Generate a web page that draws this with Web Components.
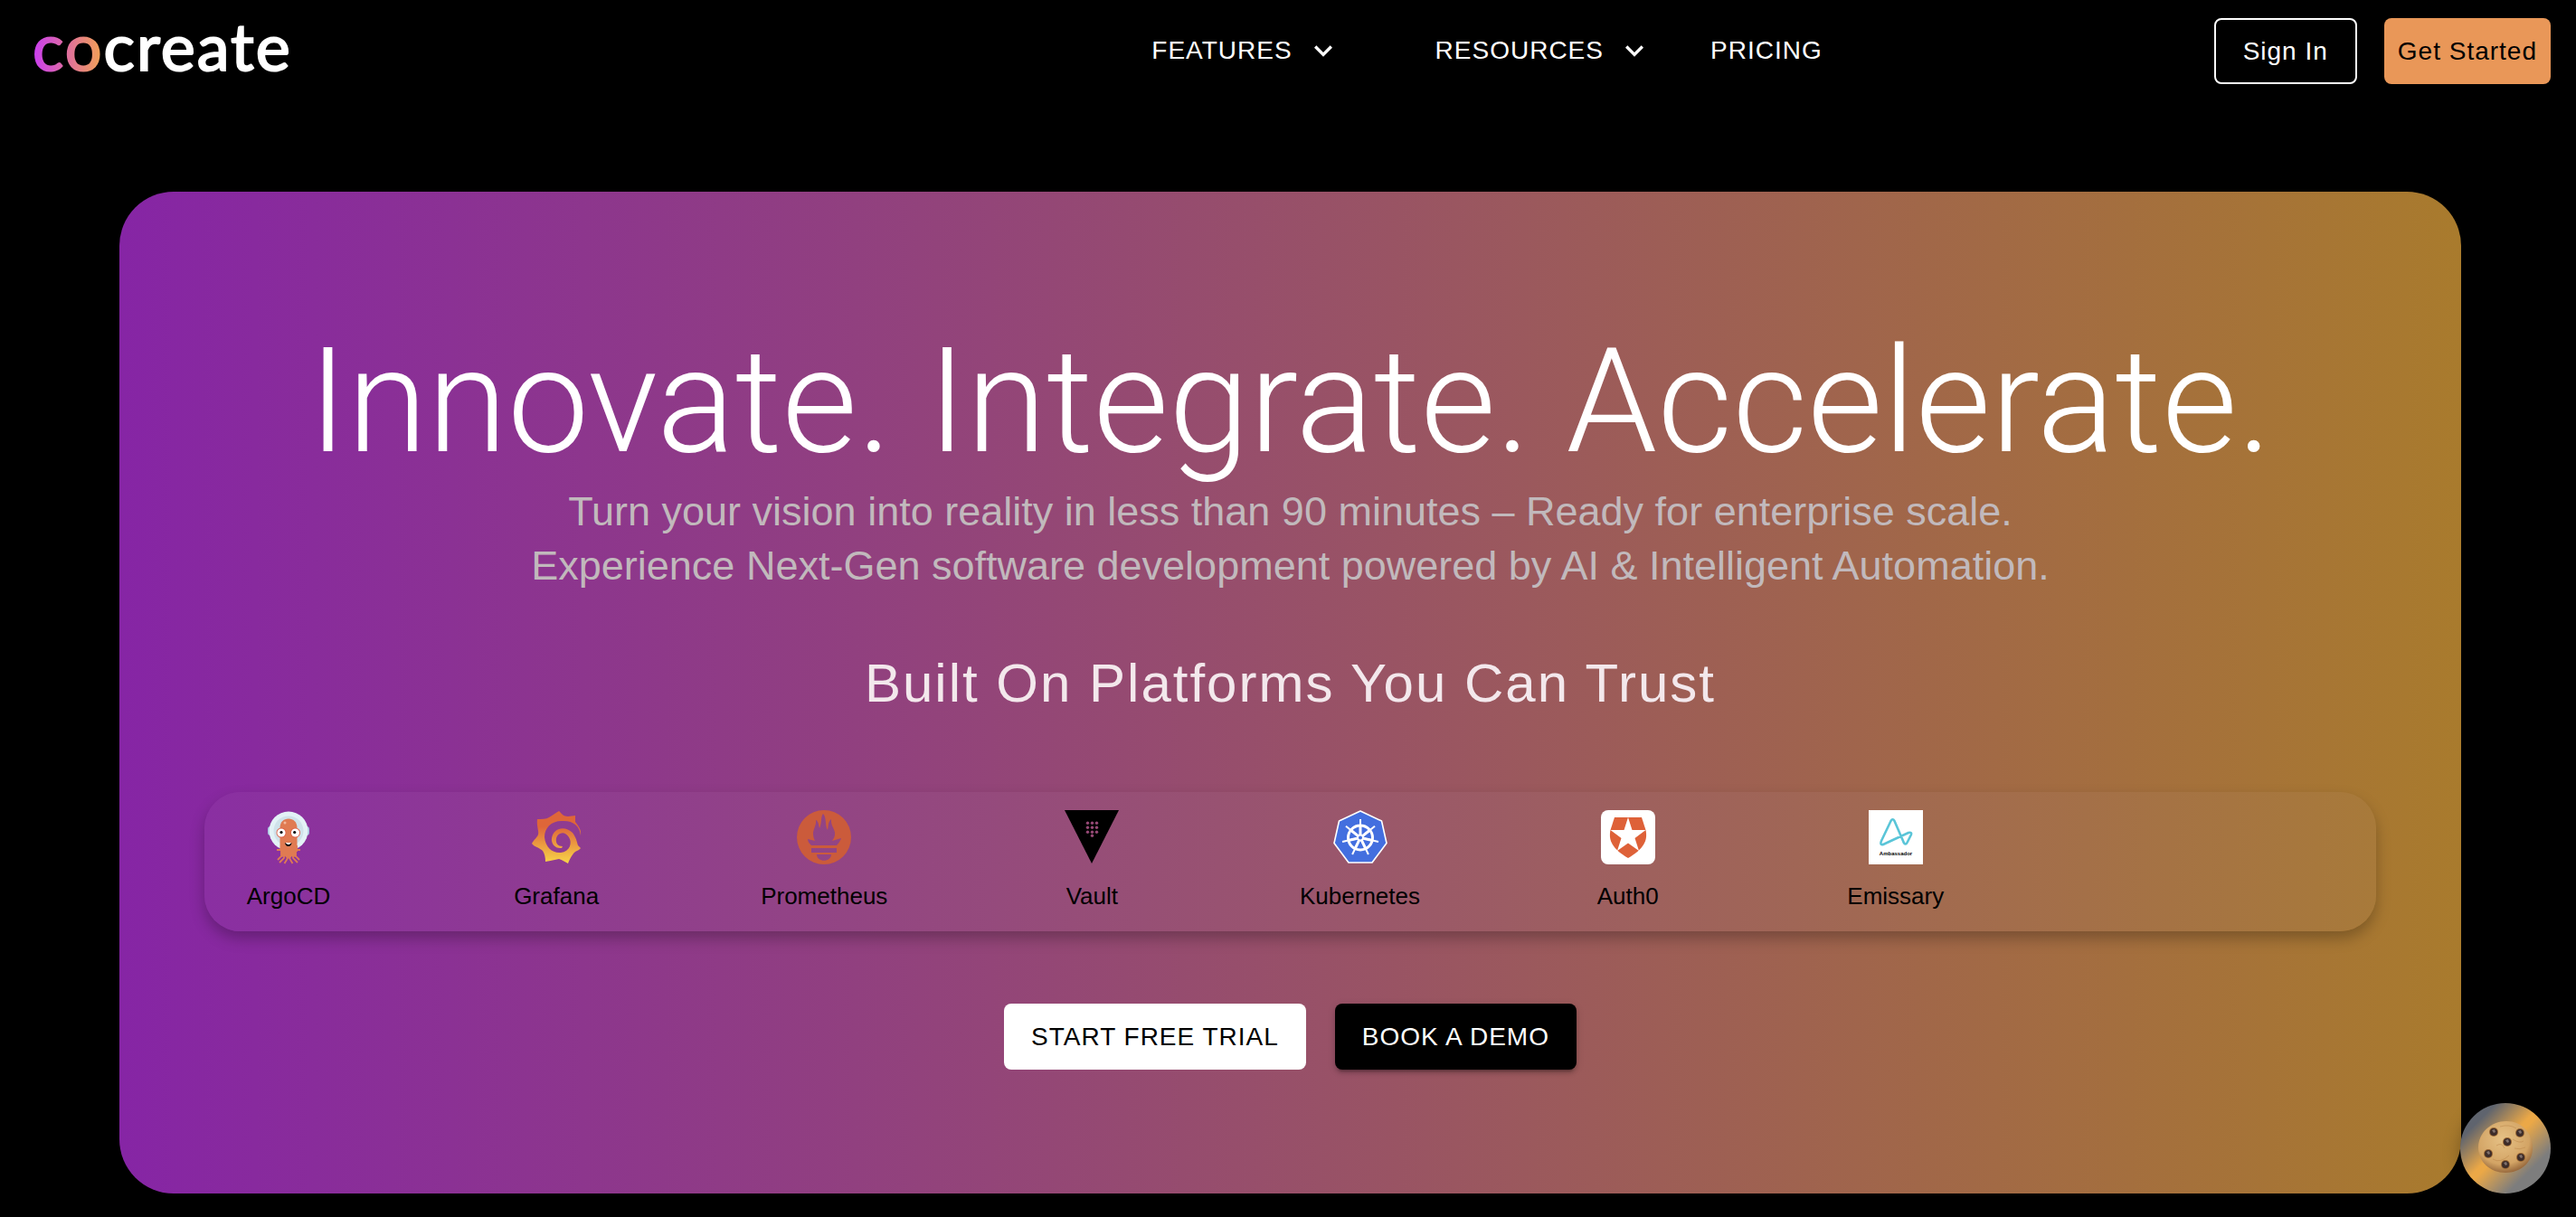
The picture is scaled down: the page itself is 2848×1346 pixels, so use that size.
<!DOCTYPE html>
<html lang="en">
<head>
<meta charset="utf-8">
<meta name="viewport" content="width=device-width, initial-scale=1">
<title>cocreate</title>
<style>
  :root {
    --font-sans: "Liberation Sans", Arial, sans-serif;
    --font-light: Roboto, "Liberation Sans", sans-serif;
    --font-logo: Lato, sans-serif;
    --color-bg: #000;
    --color-fg: #fff;
    --color-accent: #e99758;
    --size-label: 26px;
    --size-body: 28px;
    --size-lead: 45px;
    --size-title: 60px;
    --size-display: 161px;
    --radius-sm: 8px;
    --radius-md: 40px;
    --radius-lg: 60px;
  }
  body { margin: 0; background: var(--color-bg); color: var(--color-fg); font-family: var(--font-sans); }
</style>
</head>
<body>
<cc-header></cc-header>
<main>
  <cc-hero>
    <span slot="title">Innovate. Integrate. Accelerate.</span>
    <span slot="lead">Turn your vision into reality in less than 90 minutes – Ready for enterprise scale.<br>Experience Next-Gen software development powered by AI &amp; Intelligent Automation.</span>
    <span slot="subtitle">Built On Platforms You Can Trust</span>
    <cc-platforms slot="platforms">
      <cc-platform icon="argo">ArgoCD</cc-platform>
      <cc-platform icon="grafana">Grafana</cc-platform>
      <cc-platform icon="prometheus">Prometheus</cc-platform>
      <cc-platform icon="vault">Vault</cc-platform>
      <cc-platform icon="kubernetes">Kubernetes</cc-platform>
      <cc-platform icon="auth0">Auth0</cc-platform>
      <cc-platform icon="emissary">Emissary</cc-platform>
    </cc-platforms>
    <cc-button slot="actions" variant="light">START FREE TRIAL</cc-button>
    <cc-button slot="actions" variant="dark">BOOK A DEMO</cc-button>
  </cc-hero>
</main>
<cc-cookie></cc-cookie>

<script>
const ICONS = {
  argo: `
    <rect x="7" y="18" width="46" height="10" rx="3" fill="#a9c6e2"/>
    <circle cx="30" cy="23" r="21.500" fill="#e3f2f6"/>
    <circle cx="30" cy="23" r="16.500" fill="#cfe2ea"/>
    <path d="M20.500 20c0-7 4-10.500 9.500-10.500S39.500 13 39.500 20v24h-19z" fill="#e07b52"/>
    <path d="M21 40h18v6M22 42v9l-4 4M25 42v11l-5 5M28.500 42v12l-3 5M31.500 42v12l3 5M35 42v11l5 5M38 42v9l4 4M17 44h5M43 44h-5" fill="none" stroke="#e07b52" stroke-width="1.800"/>
    <path d="M21 40h18l-1 12-4-1-4 3-4-3-4 1z" fill="#e07b52"/>
    <circle cx="26" cy="14" r="1.500" fill="#f4b79b"/>
    <circle cx="22" cy="25" r="5.500" fill="#dd6248"/><circle cx="37.500" cy="25" r="5.500" fill="#dd6248"/>
    <circle cx="22" cy="25" r="4.600" fill="#fff"/><circle cx="37.500" cy="25" r="4.600" fill="#fff"/>
    <circle cx="22" cy="24.500" r="1.600"/><circle cx="36.700" cy="24.500" r="1.600"/>
    <path d="M26 36q4 2.500 7.500 0-.5 4-3.700 4T26 36z"/><path d="M26.500 36h6.500l-2 2h-2z" fill="#fff"/>`,
  grafana: `
    <defs><linearGradient id="g" x1="0" y1="1" x2="0" y2="0"><stop offset="0" stop-color="#f8d548"/><stop offset=".7" stop-color="#df6639"/></linearGradient></defs>
    <path fill="url(#g)" d="M57 28C56 17 48 11 36 12C24 12 17 20 17 30C18 41 26 48 35 47C45 46 48 36 44 30C40 23 32 24 30 31C29 37 32 40 37 40L36 42C29 43 24 37 25 31C27 19 40 17 48 25C52 30 53 36 54 39L57 42C55 45 51 45 49 48C46 52 45 54 43 59C39 57 37 55 33 54C28 55 24 56 18 57C18 52 17 48 15 45C11 41 6 41 3 37C5 33 9 30 10 27C11 23 8 18 9 10C14 10 19 10 22 8C26 6 29 3 33 1C36 4 38 7 43 7L51 6L51 13C54 17 58 21 57 28Z"/>`,
  prometheus: `
    <path fill="#cb5b3b" fill-rule="evenodd" d="M30 0a30 30 0 1 0 0 60 30 30 0 0 0 0-60ZM29 4C33 8 31 17 34 22C35 19 34 13 38 10C37 17 43 22 42 27C42 30 40 32 39 34L49 31C48 34 46 37 44 39H16C14 37 12 35 12 32L20 34C19 32 18 29 18 26C18 21 22 16 21 11C24 12 24 17 25 20C28 14 26 8 29 4ZM16 42H44V47H16ZM22 49H38C38 58 22 58 22 49Z"/>`,
  vault: `
    <path d="M0 0H60L30 59Z"/>
    <g fill="#964976">${[[14, [25, 30, 35]], [19, [25, 30, 35]], [24, [25, 30, 35]], [28, [30]]].map(([y, xs]) => xs.map(x => `<circle cx="${x + .5}" cy="${y + .3}" r="1.700"/>`).join('')).join('')}</g>`,
  kubernetes: `
    <path d="M30 1L53.500 12L59 36.500L43 58H17L1 36.500L6.500 12Z" fill="#436fdf" stroke="#fff" stroke-width="1.600" stroke-linejoin="round"/>
    <g stroke="#fff" fill="none"><circle cx="30" cy="30.500" r="13.500" stroke-width="3"/>
    ${[0, 1, 2, 3, 4, 5, 6].map(i => `<path d="M30 27V10" stroke-width="2" transform="rotate(${i * 360 / 7} 30 30.500)"/><path d="M30 27V18" stroke-width="3" transform="rotate(${i * 360 / 7} 30 30.500)"/>`).join('')}
    <circle cx="30" cy="30.500" r="3" stroke-width="2"/></g>`,
  auth0: `
    <rect width="60" height="60" rx="8" fill="#fff"/>
    <path d="M15 8H45L49.500 22C52 34 47 43 30 53C13 43 8 34 10.500 22Z" fill="#de6138"/>
    <path d="M30 8L34.500 22H49.500L37.500 31L42 45L30 36.500L18 45L22.500 31L10.500 22H25.500Z" fill="#fff"/>`,
  emissary: `
    <rect width="60" height="60" fill="#fff"/>
    <path d="M24.500 12Q26.500 8.500 28.500 12L38 34Q40.500 41 43.500 34L47 27Q48 24 44 25L16 38Q12 39 14 34Z" fill="none" stroke="#5ac5d8" stroke-width="2.600" stroke-linejoin="round"/>
    <text x="30" y="50" text-anchor="middle" font-family="Liberation Sans, sans-serif" font-size="6" font-weight="700" fill="#000">Ambassador</text>`
};

class CcLogo extends HTMLElement {
  constructor() {
    super();
    this.attachShadow({ mode: 'open' });
    this.shadowRoot.innerHTML = `
      <style>
        :host { display: block; }
        a { display: block; color: var(--color-fg); font: 400 72px/100px var(--font-logo); letter-spacing: 2px; text-decoration: none; -webkit-text-stroke: 2px; }
        span { background: linear-gradient(90deg, #c93cf2, #e0709c 50%, #f2a550); background-clip: text; -webkit-background-clip: text; color: transparent; }
      </style>
      <a href="#"><span>co</span>create</a>
    `;
  }
}
customElements.define('cc-logo', CcLogo);

class CcButton extends HTMLElement {
  constructor() {
    super();
    this.attachShadow({ mode: 'open' });
    this.shadowRoot.innerHTML = `
      <style>
        :host { display: block; }
        button {
          box-sizing: border-box; height: 73px; padding: 0 30px; border: none; border-radius: var(--radius-sm);
          font: 400 var(--size-body)/49px var(--font-sans); letter-spacing: 1px; cursor: pointer; white-space: nowrap;
        }
        :host([variant="outline"]) button { background: none; border: 2px solid #fff; color: #fff; }
        :host([variant="accent"]) button { background: var(--color-accent); color: #000; padding: 0 15px; }
        :host([variant="light"]) button { background: #fff; color: #000; }
        :host([variant="dark"]) button { background: #000; color: #fff; box-shadow: 0 6px 2px -4px rgba(0,0,0,.2), 0 4px 4px rgba(0,0,0,.14), 0 2px 10px rgba(0,0,0,.12); }
      </style>
      <button type="button"><slot></slot></button>
    `;
  }
}
customElements.define('cc-button', CcButton);

class CcNavItem extends HTMLElement {
  constructor() {
    super();
    this.attachShadow({ mode: 'open' });
    this.shadowRoot.innerHTML = `
      <style>
        :host { display: block; }
        button, a {
          display: flex; align-items: center; gap: 14px; padding: 0; border: none; background: none;
          color: var(--color-fg); font: 400 var(--size-body)/40px var(--font-sans); letter-spacing: 1px; text-decoration: none; cursor: pointer;
        }
        svg { width: 40px; height: 40px; fill: currentColor; }
      </style>
      ${this.hasAttribute('menu')
        ? '<button type="button" aria-haspopup="true"><slot></slot><svg viewBox="0 0 24 24" aria-hidden="true"><path d="M7.410 8.590 12 13.170l4.590-4.580L18 10l-6 6-6-6z"/></svg></button>'
        : '<a href="#"><slot></slot></a>'}
    `;
  }
}
customElements.define('cc-nav-item', CcNavItem);

class CcHeader extends HTMLElement {
  constructor() {
    super();
    this.attachShadow({ mode: 'open' });
    this.shadowRoot.innerHTML = `
      <style>
        :host { display: block; }
        header { display: grid; grid-template-columns: 4fr 5fr; align-items: center; height: 112px; padding: 0 28px 0 36px; }
        cc-logo { align-self: start; }
        .bar, nav, .actions { display: flex; align-items: center; }
        .bar { justify-content: space-between; }
        nav { gap: 64px; }
        .wide { margin-right: 40px; }
        .actions { gap: 30px; }
      </style>
      <header>
        <cc-logo></cc-logo>
        <div class="bar">
          <nav>
            <cc-nav-item class="wide" menu>FEATURES</cc-nav-item>
            <cc-nav-item menu>RESOURCES</cc-nav-item>
            <cc-nav-item>PRICING</cc-nav-item>
          </nav>
          <div class="actions">
            <cc-button variant="outline">Sign In</cc-button>
            <cc-button variant="accent">Get Started</cc-button>
          </div>
        </div>
      </header>
    `;
  }
}
customElements.define('cc-header', CcHeader);

class CcPlatform extends HTMLElement {
  connectedCallback() {
    if (this.shadowRoot) return;
    this.attachShadow({ mode: 'open' });
    this.shadowRoot.innerHTML = `
      <style>
        :host { display: flex; flex-direction: column; align-items: center; gap: 19px; width: 154px; color: #000; font: 400 var(--size-label)/32px var(--font-sans); }
        svg { display: block; width: 60px; height: 60px; }
      </style>
      <svg viewBox="0 0 60 60" aria-hidden="true">${ICONS[this.getAttribute('icon')]}</svg>
      <slot></slot>
    `;
  }
}
customElements.define('cc-platform', CcPlatform);

class CcPlatforms extends HTMLElement {
  constructor() {
    super();
    this.attachShadow({ mode: 'open' });
    this.shadowRoot.innerHTML = `
      <style>
        :host {
          display: grid; grid-template-columns: repeat(8, 1fr); padding: 20px 16px 23px; border-radius: var(--radius-md);
          background: linear-gradient(90deg, #8a2fa2, #a87a3a);
          box-shadow: 0 8px 16px rgba(0,0,0,.25);
        }
      </style>
      <slot></slot>
    `;
  }
}
customElements.define('cc-platforms', CcPlatforms);

class CcHero extends HTMLElement {
  constructor() {
    super();
    this.attachShadow({ mode: 'open' });
    this.shadowRoot.innerHTML = `
      <style>
        :host { display: block; margin: 100px 127px 26px 132px; }
        section {
          display: flex; flex-direction: column; align-items: center; padding: 140px 94px 137px; text-align: center;
          border-radius: var(--radius-lg); background: linear-gradient(90deg, #8625a5, #a97b2d);
        }
        h1, h2, p { margin: 0; font-weight: 400; }
        h1 { font: 300 var(--size-display)/184px var(--font-light); }
        p { font-size: var(--size-lead); line-height: 60px; color: #c1b9bc; }
        h2 { margin: 60px 0 80px; font-size: var(--size-title); line-height: 80px; letter-spacing: 2px; color: #f3e8ec; }
        slot[name="platforms"]::slotted(*) { align-self: stretch; }
        .actions { display: flex; gap: 32px; margin-top: 80px; }
      </style>
      <section>
        <h1><slot name="title"></slot></h1>
        <p><slot name="lead"></slot></p>
        <h2><slot name="subtitle"></slot></h2>
        <slot name="platforms"></slot>
        <div class="actions"><slot name="actions"></slot></div>
      </section>
    `;
  }
}
customElements.define('cc-hero', CcHero);

class CcCookie extends HTMLElement {
  constructor() {
    super();
    this.attachShadow({ mode: 'open' });
    const chips = [[17, 12], [46, 13], [32, 23], [11, 36], [47, 40], [30, 48]];
    this.shadowRoot.innerHTML = `
      <style>
        :host { position: fixed; right: 28px; bottom: 26px; }
        button {
          display: flex; align-items: center; justify-content: center; width: 100px; height: 100px; padding: 0; border: none; border-radius: 50%; cursor: pointer;
          background: linear-gradient(135deg, #5f646e 20%, #eba847 46%, #eba847 50%, #7d7d7d 76%); box-shadow: 0 4px 20px rgba(0,0,0,.3);
        }
        svg { width: 60px; height: 60px; }
      </style>
      <button type="button" aria-label="Cookie settings">
        <svg viewBox="0 0 60 60" aria-hidden="true">
          <defs><radialGradient id="dough" cx=".45" cy=".35" r=".65"><stop offset="0" stop-color="#e6c185"/><stop offset=".75" stop-color="#d3a465"/><stop offset="1" stop-color="#9a6b3e"/></radialGradient></defs>
          <path d="M31 0C48 0 60 13 60 30C60 46 46 57 30 57C13 57 0 45 0 29C0 13 14 0 31 0Z" fill="url(#dough)"/>
          <path d="M24 6q10-3 18 2M20 27q6-4 9 3M38 20q8 5 12 2M16 42q8 5 18-4M40 30q6 2 12-1" fill="none" stroke="#b98348" stroke-opacity=".5"/>
          ${chips.map(([x, y]) => `<circle cx="${x}" cy="${y}" r="5" fill="#986633"/><circle cx="${x}" cy="${y}" r="4" fill="#3d2c29"/><path d="M${x - 2} ${y - 2}l3-1 1 3-2 1z" fill="#80716d"/>`).join('')}
        </svg>
      </button>
    `;
  }
}
customElements.define('cc-cookie', CcCookie);
</script>
</body>
</html>
